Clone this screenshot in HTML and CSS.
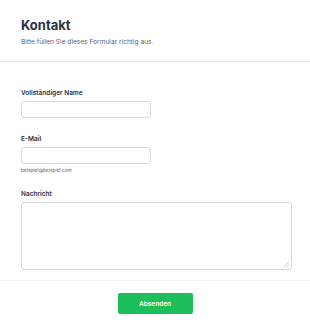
FILE: index.html
```html
<!DOCTYPE html>
<html lang="de">
<head>
<meta charset="utf-8">
<title>Kontakt</title>
<link rel="stylesheet" href="styles.css">
</head>
<body>
<div class="form">
  <header class="form-header">
    <h1 class="title">Kontakt</h1>
    <p class="subtitle">Bitte füllen Sie dieses Formular richtig aus.</p>
  </header>
  <div class="fields">
    <div class="field">
      <label class="label" for="name">Vollständiger Name</label>
      <input class="input" id="name" type="text">
    </div>
    <div class="field">
      <label class="label" for="email">E-Mail</label>
      <input class="input" id="email" type="email">
      <span class="hint">beispiel@beispiel.com</span>
    </div>
    <div class="field">
      <label class="label" for="msg">Nachricht</label>
      <textarea class="textarea" id="msg"></textarea>
    </div>
  </div>
  <div class="actions">
    <button class="submit" type="button">Absenden</button>
  </div>
</div>
</body>
</html>
```

FILE: styles.css
```css
html, body {
  margin: 0;
  padding: 0;
  background: #ffffff;
}
body {
  font-family: Inter, "Noto Sans", "Liberation Sans", sans-serif;
  color: #2c3345;
}
.form {
  width: 310px;
}
.form-header {
  padding: 17px 21px 15px;
  border-bottom: 1px solid #e6e8ee;
}
.title {
  margin: 0;
  font-size: 13px;
  line-height: 17px;
  font-weight: 700;
  color: #2c3345;
}
.subtitle {
  margin: 4px 0 0;
  font-size: 6.6px;
  line-height: 8px;
  color: #57647e;
}
.fields {
  padding: 27px 18px 10px 21px;
  display: flex;
  flex-direction: column;
  gap: 17px;
  border-bottom: 1px solid #f3f3f5;
}
.field {
  display: flex;
  flex-direction: column;
  align-items: flex-start;
}
.label {
  font-size: 6.5px;
  line-height: 8px;
  font-weight: 600;
  color: #2c3345;
  margin-bottom: 4px;
}
.input {
  box-sizing: border-box;
  width: 130px;
  height: 17px;
  border: 1px solid #d8dae3;
  border-radius: 3px;
  background: #fff;
  padding: 0 5px;
  margin: 0;
  outline: none;
}
.hint {
  font-size: 4.8px;
  line-height: 6px;
  color: #57647e;
  margin-top: 3px;
}
.textarea {
  box-sizing: border-box;
  width: 271px;
  height: 68px;
  border: 1px solid #d8dae3;
  border-radius: 3px;
  background: #fff;
  margin: 0;
  padding: 4px;
  resize: vertical;
  outline: none;
  display: block;
}
.textarea::-webkit-resizer {
  background:
    linear-gradient(135deg, transparent 45%, #cfd1d8 45%, #cfd1d8 58%, transparent 58%, transparent 72%, #cfd1d8 72%, #cfd1d8 85%, transparent 85%) no-repeat right 2px bottom 2px / 5px 5px;
}
.actions {
  display: flex;
  justify-content: center;
  padding: 12px 0 16px;
}
.submit {
  width: 75px;
  height: 21px;
  border: none;
  border-radius: 2px;
  background: #1dbf5c;
  color: #ffffff;
  font-family: Inter, "Noto Sans", "Liberation Sans", sans-serif;
  font-size: 6.5px;
  font-weight: 600;
  cursor: pointer;
}
```
